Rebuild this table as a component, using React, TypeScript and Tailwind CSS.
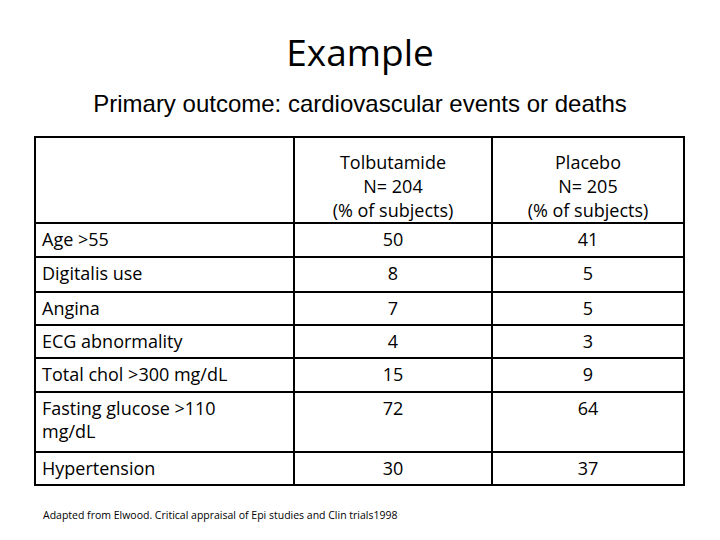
import React from "react";

const rows: { label: React.ReactNode; a: string; b: string; h: string }[] = [
  { label: "Age >55", a: "50", b: "41", h: "h-[34px]" },
  { label: "Digitalis use", a: "8", b: "5", h: "h-[35px]" },
  { label: "Angina", a: "7", b: "5", h: "h-[33px]" },
  { label: "ECG abnormality", a: "4", b: "3", h: "h-[33px]" },
  { label: "Total chol >300 mg/dL", a: "15", b: "9", h: "h-[34px]" },
  {
    label: (
      <>
        Fasting glucose &gt;110
        <br />
        mg/dL
      </>
    ),
    a: "72",
    b: "64",
    h: "h-[60px]",
  },
  { label: "Hypertension", a: "30", b: "37", h: "h-[33px]" },
];

export default function App() {
  const body = "font-['Open_Sans',sans-serif] text-[18px] text-black";
  return (
    <div className="w-[720px] h-[540px] bg-white overflow-hidden">
      <div className="pt-[28px] text-center font-['Open_Sans',sans-serif] text-[37px] leading-[48px] text-black">
        Example
      </div>
      <div className="mt-[14px] text-center font-['Liberation_Sans',Arial,sans-serif] text-[24px] leading-[28px] text-black">
        Primary outcome: cardiovascular events or deaths
      </div>
      <div className="ml-[34px] mt-[18px] w-[651px] border-l-2 border-t-2 border-black grid grid-cols-[259px_198px_192px]">
        <div className="h-[86px] border-r-2 border-b-2 border-black" />
        <div className={`h-[86px] border-r-2 border-b-2 border-black pt-[12px] text-center leading-[24px] ${body}`}>
          Tolbutamide
          <br />
          N= 204
          <br />
          (% of subjects)
        </div>
        <div className={`h-[86px] border-r-2 border-b-2 border-black pt-[12px] text-center leading-[24px] ${body}`}>
          Placebo
          <br />
          N= 205
          <br />
          (% of subjects)
        </div>
        {rows.map((r, i) => (
          <React.Fragment key={i}>
            <div className={`${r.h} border-r-2 border-b-2 border-black pt-[4px] pl-[6px] leading-[23px] ${body}`}>
              {r.label}
            </div>
            <div className={`${r.h} border-r-2 border-b-2 border-black pt-[4px] text-center leading-[23px] ${body}`}>
              {r.a}
            </div>
            <div className={`${r.h} border-r-2 border-b-2 border-black pt-[4px] text-center leading-[23px] ${body}`}>
              {r.b}
            </div>
          </React.Fragment>
        ))}
      </div>
      <div className="ml-[43px] mt-[22px] font-['Open_Sans',sans-serif] text-[10.5px] leading-[14px] text-black">
        Adapted from Elwood. Critical appraisal of Epi studies and Clin trials1998
      </div>
    </div>
  );
}
